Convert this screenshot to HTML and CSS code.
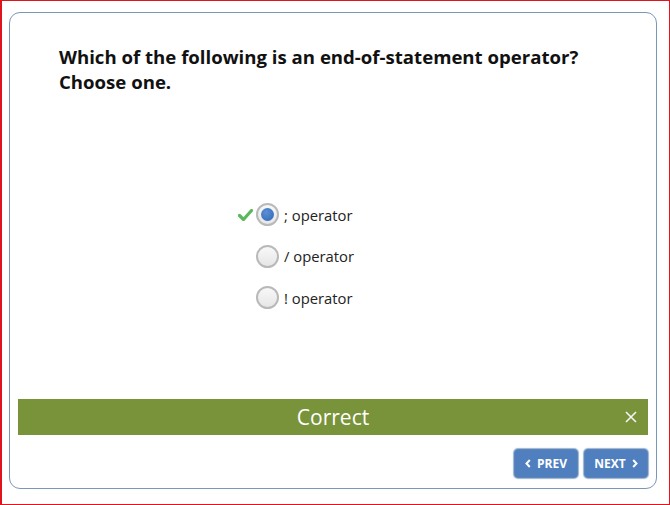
FILE: index.html
```html
<!DOCTYPE html>
<html>
<head>
<meta charset="utf-8">
<link rel="stylesheet" href="styles.css">
</head>
<body>
<div class="frame">
  <div class="card">
    <div class="question">Which of the following is an end-of-statement operator?<br>Choose one.</div>
    <div class="options">
      <div class="option">
        <span class="mark">
          <svg width="15" height="12" viewBox="0 0 15 12"><path d="M1.5 6.5 L5.5 10.5 L13.5 1.5" fill="none" stroke="#5cb85c" stroke-width="3.2" stroke-linecap="round" stroke-linejoin="round"/></svg>
        </span>
        <span class="radio checked"><span class="dot"></span></span>
        <span class="label">; operator</span>
      </div>
      <div class="option">
        <span class="mark"></span>
        <span class="radio"></span>
        <span class="label">/ operator</span>
      </div>
      <div class="option">
        <span class="mark"></span>
        <span class="radio"></span>
        <span class="label">! operator</span>
      </div>
    </div>
    <div class="feedback">
      <span class="fb-text">Correct</span>
      <svg class="fb-close" width="12" height="12" viewBox="0 0 12 12"><path d="M1 1 L11 11 M11 1 L1 11" stroke="#f4f4f4" stroke-width="1.6" fill="none"/></svg>
    </div>
    <div class="nav">
      <button class="btn"><svg class="chev" width="6" height="9" viewBox="0 0 6 9"><path d="M4.8 1 L1.5 4.5 L4.8 8" stroke="#fff" stroke-width="2" fill="none"/></svg>PREV</button>
      <button class="btn">NEXT<svg class="chev" width="6" height="9" viewBox="0 0 6 9"><path d="M1.2 1 L4.5 4.5 L1.2 8" stroke="#fff" stroke-width="2" fill="none"/></svg></button>
    </div>
  </div>
</div>
</body>
</html>
```

FILE: styles.css
```css
* { box-sizing: border-box; }
html, body { margin: 0; padding: 0; background: #fff; }
body { font-family: "Open Sans", "Noto Sans", sans-serif; }
.frame {
  width: 670px;
  height: 505px;
  border: 1px solid #e0141c;
  border-left-width: 2px;
  padding: 11px 12px 0 7px;
}
.card {
  width: 648px;
  height: 477px;
  border: 1px solid #7a97b8;
  border-radius: 11px;
  display: flex;
  flex-direction: column;
}
.question {
  padding: 31px 0 0 49px;
  font-size: 18.6px;
  font-weight: 700;
  line-height: 25px;
  color: #111;
}
.options {
  margin-top: 109px;
  padding-left: 228px;
  display: flex;
  flex-direction: column;
  gap: 18.5px;
}
.option {
  display: flex;
  align-items: center;
  height: 23px;
}
.mark {
  width: 18px;
  height: 12px;
  display: flex;
  align-items: center;
}
.radio {
  width: 23px;
  height: 23px;
  border-radius: 50%;
  border: 2px solid #b9b9b9;
  background: linear-gradient(#f8f8f8, #e6e6e6);
  display: flex;
  align-items: center;
  justify-content: center;
}
.radio .dot {
  width: 13px;
  height: 13px;
  border-radius: 50%;
  background: radial-gradient(circle at 40% 35%, #5b8fd6, #2f66b3);
}
.label {
  margin-left: 5px;
  font-size: 14.8px;
  color: #222;
}
.feedback {
  margin: 90px 8px 0 8px;
  height: 36px;
  background: #79933b;
  position: relative;
  display: flex;
  align-items: center;
  justify-content: center;
}
.fb-text {
  color: #fff;
  font-size: 21px;
  font-weight: 400;
}
.fb-close {
  position: absolute;
  right: 11px;
  top: 12px;
}
.nav {
  display: flex;
  justify-content: flex-end;
  gap: 6px;
  margin-top: 14px;
  padding-right: 8px;
}
.btn {
  height: 29px;
  width: 64px;
  border: 1px solid #5d85b8;
  border-radius: 4px;
  background: #4f7fbf;
  box-shadow: 0 0 1px 1px #9ab3d3;
  color: #fff;
  font-family: "Open Sans", sans-serif;
  font-weight: 700;
  font-size: 12px;
  padding: 0;
  display: flex;
  align-items: center;
  justify-content: center;
  gap: 6px;
}
```
